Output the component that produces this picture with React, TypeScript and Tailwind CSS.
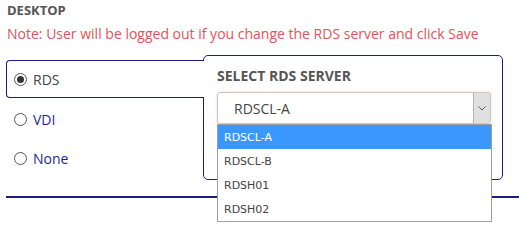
import React from "react";

const navy = "border-[#1c1c86]";

function Radio({ checked }: { checked?: boolean }) {
  return (
    <span className="w-[13px] h-[13px] rounded-full border border-[#555] flex items-center justify-center shrink-0 bg-white">
      {checked && <span className="w-[7px] h-[7px] rounded-full bg-[#333]" />}
    </span>
  );
}

export default function App() {
  const options = ["RDSCL-A", "RDSCL-B", "RDSH01", "RDSH02"];
  return (
    <div className="w-[519px] h-[237px] bg-white overflow-hidden font-['Open_Sans',sans-serif]">
      <div className="pl-[6px] pt-[1px]">
        <div className="text-[13px] leading-[18px] font-bold text-[#555] pl-[1px]">DESKTOP</div>
        <div className="mt-[5px] text-[14px] leading-[20px] text-[#e5525a] pl-[1px]">
          Note: User will be logged out if you change the RDS server and click Save
        </div>
        <div className="mt-[11px] flex items-start">
          <div className="w-[197px] shrink-0">
            <div className={`mt-[5px] w-[198px] h-[38px] relative z-10 bg-white border-t border-l border-b ${navy} rounded-l-[4px] flex items-center pl-[7px] gap-[6px]`}>
              <Radio checked />
              <span className="text-[14px] text-[#444]">RDS</span>
            </div>
            <div className="h-[40px] flex items-center pl-[8px] gap-[6px] mt-[1px]">
              <Radio />
              <span className="text-[14px] text-[#1f1f9e]">VDI</span>
            </div>
            <div className="h-[38px] flex items-center pl-[8px] gap-[6px]">
              <Radio />
              <span className="text-[14px] text-[#1f1f9e]">None</span>
            </div>
          </div>
          <div className={`w-[300px] h-[125px] border ${navy} rounded-[5px] pl-[13px] pr-[11px] pt-[10px]`}>
            <div className="text-[14px] leading-[19px] font-bold text-[#555]">SELECT RDS SERVER</div>
            <div className="relative mt-[7px]">
              <div className="h-[32px] border border-[#d6c6c0] rounded-[3px] shadow-[0_0_2px_rgba(200,170,160,0.6)] bg-white flex items-center pl-[16px] relative">
                <span className="text-[14px] text-[#444]">RDSCL-A</span>
                <div className="absolute right-0 top-0 bottom-0 w-[17px] bg-[#e0e0e0] border-l border-[#b5b5b5] flex items-center justify-center">
                  <svg width="8" height="5" viewBox="0 0 8 5" fill="none">
                    <path d="M0.5 0.5 L4 4 L7.5 0.5" stroke="#555" strokeWidth="1" />
                  </svg>
                </div>
              </div>
              <div className="absolute left-0 top-full w-[275px] z-20 bg-white border border-[#a0a0a0] font-['DejaVu_Sans',sans-serif] text-[11px]">
                {options.map((o, i) => (
                  <div
                    key={o}
                    className={`h-[24px] flex items-center pl-[6px] pt-[2px] ${i === 0 ? "bg-[#3a98fc] text-white" : "text-[#444]"}`}
                  >
                    {o}
                  </div>
                ))}
              </div>
            </div>
          </div>
        </div>
        <div className="mt-[16px] h-[2px] bg-[#1c1c86]" />
      </div>
    </div>
  );
}
